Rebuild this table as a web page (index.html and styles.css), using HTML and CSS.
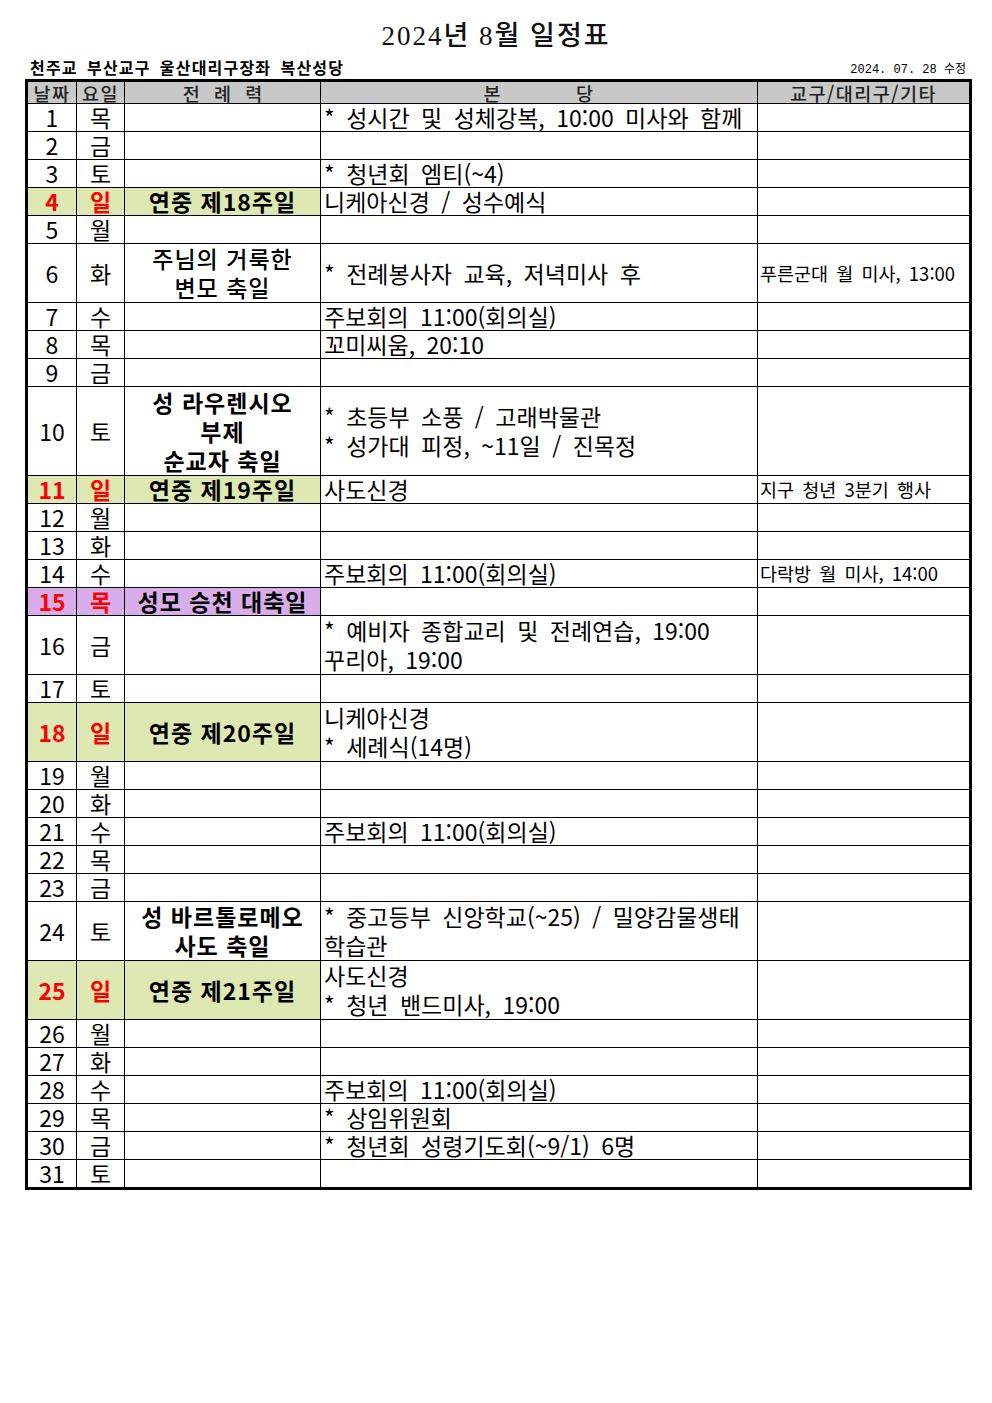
FILE: index.html
```html
<!DOCTYPE html>
<html lang="ko">
<head>
<meta charset="utf-8">
<title>2024년 8월 일정표</title>
<link rel="stylesheet" href="styles.css">
</head>
<body>
<div class="page">
  <h1 class="title">2024년 8월 일정표</h1>
  <div class="subbar">
    <span class="org">천주교 부산교구 울산대리구장좌 복산성당</span>
    <span class="rev">2024. 07. 28 수정</span>
  </div>
  <table class="sched">
    <colgroup>
      <col class="c1"><col class="c2"><col class="c3"><col class="c4"><col class="c5">
    </colgroup>
    <thead>
      <tr><th>날짜</th><th>요일</th><th class="sp1">전 례 력</th><th>본<span class="gap"></span>당</th><th>교구/대리구/기타</th></tr>
    </thead>
    <tbody>
      <tr><td class="d">1</td><td class="w">목</td><td class="l"></td><td class="m">* 성시간 및 성체강복, 10:00 미사와 함께</td><td class="o"></td></tr>
      <tr><td class="d">2</td><td class="w">금</td><td class="l"></td><td class="m"></td><td class="o"></td></tr>
      <tr><td class="d">3</td><td class="w">토</td><td class="l"></td><td class="m">* 청년회 엠티(~4)</td><td class="o"></td></tr>
      <tr class="sun"><td class="d">4</td><td class="w">일</td><td class="l">연중 제18주일</td><td class="m">니케아신경 / 성수예식</td><td class="o"></td></tr>
      <tr><td class="d">5</td><td class="w">월</td><td class="l"></td><td class="m"></td><td class="o"></td></tr>
      <tr class="h2"><td class="d">6</td><td class="w">화</td><td class="l reg">주님의 거룩한<br>변모 축일</td><td class="m">* 전례봉사자 교육, 저녁미사 후</td><td class="o">푸른군대 월 미사, 13:00</td></tr>
      <tr><td class="d">7</td><td class="w">수</td><td class="l"></td><td class="m">주보회의 11:00(회의실)</td><td class="o"></td></tr>
      <tr><td class="d">8</td><td class="w">목</td><td class="l"></td><td class="m">꼬미씨움, 20:10</td><td class="o"></td></tr>
      <tr><td class="d">9</td><td class="w">금</td><td class="l"></td><td class="m"></td><td class="o"></td></tr>
      <tr class="h3"><td class="d">10</td><td class="w">토</td><td class="l">성 라우렌시오<br>부제<br>순교자 축일</td><td class="m">* 초등부 소풍 / 고래박물관<br>* 성가대 피정, ~11일 / 진목정</td><td class="o"></td></tr>
      <tr class="sun"><td class="d">11</td><td class="w">일</td><td class="l">연중 제19주일</td><td class="m">사도신경</td><td class="o">지구 청년 3분기 행사</td></tr>
      <tr><td class="d">12</td><td class="w">월</td><td class="l"></td><td class="m"></td><td class="o"></td></tr>
      <tr><td class="d">13</td><td class="w">화</td><td class="l"></td><td class="m"></td><td class="o"></td></tr>
      <tr><td class="d">14</td><td class="w">수</td><td class="l"></td><td class="m">주보회의 11:00(회의실)</td><td class="o">다락방 월 미사, 14:00</td></tr>
      <tr class="fest"><td class="d">15</td><td class="w">목</td><td class="l">성모 승천 대축일</td><td class="m"></td><td class="o"></td></tr>
      <tr class="h2"><td class="d">16</td><td class="w">금</td><td class="l"></td><td class="m">* 예비자 종합교리 및 전례연습, 19:00<br>꾸리아, 19:00</td><td class="o"></td></tr>
      <tr><td class="d">17</td><td class="w">토</td><td class="l"></td><td class="m"></td><td class="o"></td></tr>
      <tr class="sun h2"><td class="d">18</td><td class="w">일</td><td class="l">연중 제20주일</td><td class="m">니케아신경<br>* 세례식(14명)</td><td class="o"></td></tr>
      <tr><td class="d">19</td><td class="w">월</td><td class="l"></td><td class="m"></td><td class="o"></td></tr>
      <tr><td class="d">20</td><td class="w">화</td><td class="l"></td><td class="m"></td><td class="o"></td></tr>
      <tr><td class="d">21</td><td class="w">수</td><td class="l"></td><td class="m">주보회의 11:00(회의실)</td><td class="o"></td></tr>
      <tr><td class="d">22</td><td class="w">목</td><td class="l"></td><td class="m"></td><td class="o"></td></tr>
      <tr><td class="d">23</td><td class="w">금</td><td class="l"></td><td class="m"></td><td class="o"></td></tr>
      <tr class="h2"><td class="d">24</td><td class="w">토</td><td class="l">성 바르톨로메오<br>사도 축일</td><td class="m">* 중고등부 신앙학교(~25) / 밀양감물생태<br>학습관</td><td class="o"></td></tr>
      <tr class="sun h2"><td class="d">25</td><td class="w">일</td><td class="l">연중 제21주일</td><td class="m">사도신경<br>* 청년 밴드미사, 19:00</td><td class="o"></td></tr>
      <tr><td class="d">26</td><td class="w">월</td><td class="l"></td><td class="m"></td><td class="o"></td></tr>
      <tr><td class="d">27</td><td class="w">화</td><td class="l"></td><td class="m"></td><td class="o"></td></tr>
      <tr><td class="d">28</td><td class="w">수</td><td class="l"></td><td class="m">주보회의 11:00(회의실)</td><td class="o"></td></tr>
      <tr><td class="d">29</td><td class="w">목</td><td class="l"></td><td class="m">* 상임위원회</td><td class="o"></td></tr>
      <tr><td class="d">30</td><td class="w">금</td><td class="l"></td><td class="m">* 청년회 성령기도회(~9/1) 6명</td><td class="o"></td></tr>
      <tr><td class="d">31</td><td class="w">토</td><td class="l"></td><td class="m"></td><td class="o"></td></tr>
    </tbody>
  </table>
</div>
</body>
</html>
```
FILE: styles.css
```css
html, body {
  margin: 0;
  padding: 0;
  background: #ffffff;
}
body {
  font-family: "Noto Sans CJK KR", "Noto Sans", sans-serif;
  color: #000;
}
.page {
  width: 992px;
  padding-top: 20px;
}
.title {
  margin: 0;
  text-align: center;
  font-family: "Liberation Serif", "Noto Sans CJK KR", serif;
  font-size: 27px;
  font-weight: 500;
  letter-spacing: 2px;
  line-height: 32px;
  color: #111;
}
.subbar {
  display: flex;
  justify-content: space-between;
  align-items: flex-end;
  margin: 5px 26px 0 30px;
  height: 22px;
}
.org {
  font-family: "Liberation Serif", "Noto Sans CJK KR", serif;
  font-size: 16px;
  font-weight: 700;
  line-height: 20px;
  letter-spacing: 1.2px;
  word-spacing: 4px;
}
.rev {
  font-family: "Liberation Mono", "Noto Sans CJK KR", monospace;
  font-size: 12px;
  line-height: 18px;
}
.sched {
  margin-left: 25px;
  width: 944px;
  table-layout: fixed;
  border-collapse: collapse;
  border: 3px solid #000;
}
.c1 { width: 50px; }
.c2 { width: 48px; }
.c3 { width: 196px; }
.c4 { width: 437px; }
.c5 { width: 213px; }
.sched th {
  background: #c8c8c8;
  border: 1px solid #000;
  height: 21px;
  padding: 0;
  font-size: 18.5px;
  font-weight: 500;
  line-height: 20px;
  letter-spacing: 1.5px;
  color: #222;
  text-align: center;
  white-space: nowrap;
}
.sched th.sp1 { letter-spacing: 4.5px; text-indent: 4.5px; }
.gap { display: inline-block; width: 74px; }
.sched td {
  border: 1px solid #000;
  padding: 0;
  height: 27px;
  font-size: 23px;
  line-height: 27px;
  vertical-align: middle;
  white-space: nowrap;
}
.sched tr.h2 td { height: 57px; line-height: 29px; }
.sched tr.h3 td { height: 88px; line-height: 29px; }
.d, .w { text-align: center; }
.l { text-align: center; font-weight: 700; letter-spacing: 1px; }
.l.reg { font-weight: 500; }
.m { padding-left: 3px !important; word-spacing: 5px; }
.o { padding-left: 2px !important; font-size: 18.5px !important; word-spacing: 3px; }
.sun .d, .sun .w, .sun .l { background: #dde8b2; }
.fest .d, .fest .w, .fest .l { background: #d9acea; }
.sun .d, .sun .w, .fest .d, .fest .w { color: #ff0000; font-weight: 700; }
```
